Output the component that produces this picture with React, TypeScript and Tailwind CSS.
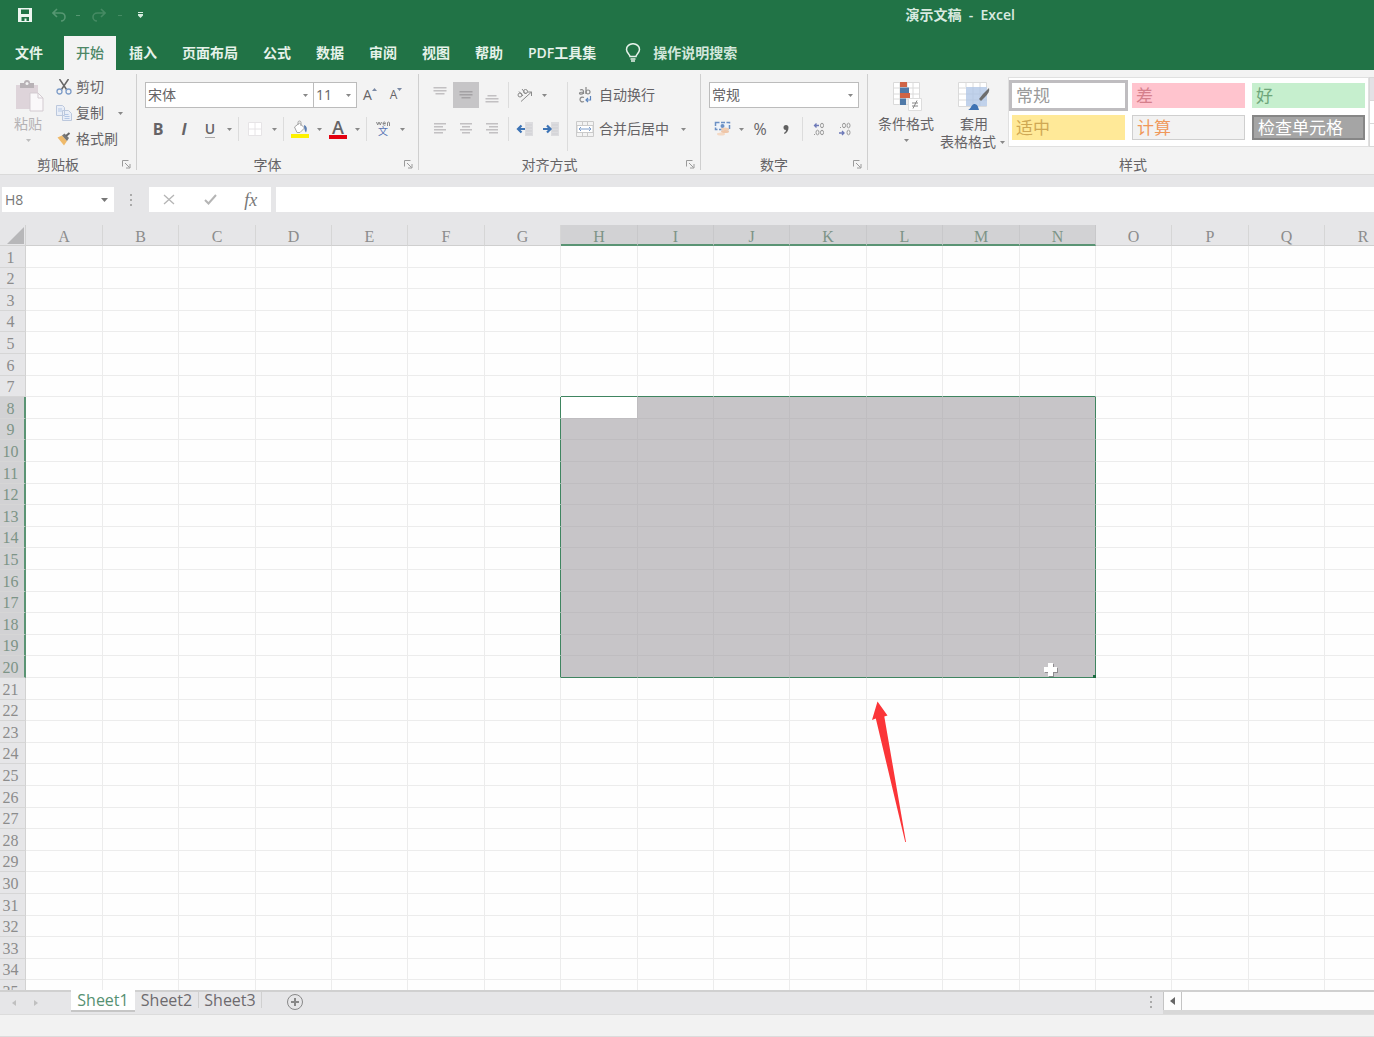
import type { ReactNode } from "react";

const COLUMNS = "ABCDEFGHIJKLMNOPQRSTUVWXYZ".split("");
const ROWS = Array.from({ length: 48 }, (_, i) => i + 1);
const TABS = ["插入", "页面布局", "公式", "数据", "审阅", "视图", "帮助", "PDF工具集"];

// selected range H8:N20
const SEL = { left: 7, right: 13, top: 8, bottom: 20 };

const inCols = (c: number) => c >= SEL.left && c <= SEL.right;
const inRows = (r: number) => r >= SEL.top && r <= SEL.bottom;

// zoomed sheet, so sizes alternate between two whole pixel values
const colWidth = (c: number) => (c % 5 === 0 || c % 5 === 2 ? "w-[77px]" : "w-[76px]");
const rowHeight = (r: number) => (r % 5 === 2 || r % 5 === 4 ? "h-[21px]" : "h-[22px]");

function Caret({ className = "w-3" }: { className?: string }) {
	return (
		<span className={`flex shrink-0 items-center justify-center ${className}`}>
			<svg width="5" height="3" viewBox="0 0 5 3" aria-hidden="true">
				<path d="M0 0h5L2.5 3z" fill="#888" />
			</svg>
		</span>
	);
}

function Sep() {
	return <span className="mx-[3px] w-px shrink-0 self-stretch bg-[#dcdcdc]" />;
}

function Tool({ label, active, children }: { label: string; active?: boolean; children: ReactNode }) {
	return (
		<button
			type="button"
			aria-label={label}
			className={`flex h-full w-[26px] shrink-0 items-center justify-center ${active ? "bg-[#c6c5c7]" : ""}`}
		>
			{children}
		</button>
	);
}

function Group({ title, launcher, className = "", children }: { title: string; launcher?: boolean; className?: string; children: ReactNode }) {
	return (
		<section className={`flex flex-col ${className}`}>
			<div className="flex h-[85px]">{children}</div>
			<div className="flex h-[11px] items-center leading-3">
				<h2 className={`flex-1 text-center ${launcher ? "" : "pl-5"}`}>{title}</h2>
				{launcher && (
					<button type="button" aria-label={`${title}设置`} className="w-5 pl-[6px]">
						<svg width="9" height="9" viewBox="0 0 9 9" fill="none" stroke="#9a9a9a" aria-hidden="true">
							<path d="M.5 6.5v-6h6M3 3l4.5 4.5M8 4v4H4" />
						</svg>
					</button>
				)}
			</div>
		</section>
	);
}

function Lines({ y, widths, align, color = "#c2c0c2" }: { y: number; widths: number[]; align: "l" | "c" | "r"; color?: string }) {
	return (
		<svg width="16" height="18" viewBox="0 0 16 18" aria-hidden="true">
			{widths.map((w, i) => (
				<rect
					key={i}
					x={align === "l" ? 2 : align === "r" ? 14 - w : 8 - w / 2}
					y={y + i * 3}
					width={w}
					height="1.5"
					fill={color}
				/>
			))}
		</svg>
	);
}

function Indent({ flip }: { flip?: boolean }) {
	return (
		<svg width="18" height="16" viewBox="0 0 18 16" aria-hidden="true">
			<rect x="9" y="1" width="8" height="14" fill="#dcdcdf" />
			<path d="M10 4h6M10 7h6M10 10h6M10 13h6" stroke="#cfcfd3" />
			<path d={flip ? "M1 8h7M5 4.5L8.5 8 5 11.5" : "M2 8h7M5.5 4.5L2 8l3.5 3.5"} fill="none" stroke="#3c73b5" strokeWidth="2.2" />
		</svg>
	);
}

function TitleBar() {
	return (
		<div className="flex h-9 items-center pb-[6px]">
			<div className="flex items-center pl-[18px]">
				<button type="button" aria-label="保存">
					<svg width="14" height="14" viewBox="0 0 14 14" aria-hidden="true">
						<path d="M0 0h14v14H0z" fill="#edf6f0" />
						<path d="M3 1.5h8V6H3zM3.5 9H11v4H8.500v-2.500h-2V13h-3z" fill="#217346" />
					</svg>
				</button>
				<button type="button" aria-label="撤消" className="ml-5">
					<svg width="14" height="14" viewBox="0 0 14 14" fill="none" stroke="#569772" strokeWidth="1.6" aria-hidden="true">
						<path d="M5 1L1 5l4 4M1 5h7.500c3 0 4.500 2 4.500 4s-1.500 4-4 4" />
					</svg>
				</button>
				<span className="ml-[10px] h-px w-1 bg-[#569772]" />
				<button type="button" aria-label="恢复" className="ml-3">
					<svg width="14" height="14" viewBox="0 0 14 14" fill="none" stroke="#458a63" strokeWidth="1.6" aria-hidden="true">
						<path d="M9 1l4 4-4 4M13 5H5.500C2.500 5 1 7 1 9s1.500 4 4 4" />
					</svg>
				</button>
				<span className="ml-3 h-px w-1 bg-[#458a63]" />
				<button type="button" aria-label="自定义快速访问工具栏" className="ml-4">
					<svg width="5" height="6" viewBox="0 0 5 6" fill="#d5ebde" aria-hidden="true">
						<path d="M0 0h5v1H0zM0 2h5v1.500L2.500 6 0 3.500z" />
					</svg>
				</button>
			</div>
			<h1 className="mr-[359px] ml-auto font-semibold whitespace-pre text-[#d9eae0]">{"演示文稿  -  Excel"}</h1>
		</div>
	);
}

function TabBar() {
	return (
		<nav className="flex h-[34px] items-stretch gap-px font-semibold whitespace-nowrap text-[#e6f2ea]">
			<button type="button" className="mr-[5px] px-[15px]">文件</button>
			<button type="button" className="bg-[#f3f3f3] px-3 font-medium text-[#4d8766]">开始</button>
			{TABS.map((t) => (
				<button type="button" key={t} className="px-3">{t}</button>
			))}
			<button type="button" className="flex items-center gap-3 pl-4 text-[#d3e7db]">
				<svg width="16" height="20" viewBox="0 0 16 20" fill="none" stroke="#e6f2ea" strokeWidth="1.5" aria-hidden="true">
					<path d="M5 13.500c0-2-3.500-3.500-3.500-7a6.200 5.500 0 0 1 13 0c0 3.500-3.500 5-3.500 7zM5.500 16h5M6 18h4" />
				</svg>
				操作说明搜索
			</button>
		</nav>
	);
}

function Clipboard() {
	return (
		<Group title="剪贴板" launcher className="w-[137px] shrink-0 border-r border-[#cfcfcf]">
			<button type="button" className="ml-2 flex w-10 flex-col items-center pt-[6px] text-[#b5b2b5]">
				<svg width="32" height="32" viewBox="0 0 32 32" aria-hidden="true">
					<path d="M4 5h22v24H4z" fill="#ded4da" />
					<path d="M8 3h4a3 3 0 0 1 6 0h4v5H8z" fill="#b8b2b6" />
					<circle cx="15" cy="3.5" r="1.5" fill="#f3f3f3" />
					<path d="M18 13h8l5 5v13H18z" fill="#faf8fa" stroke="#d3cbd1" />
					<path d="M26 13v5h5" fill="none" stroke="#d3cbd1" />
				</svg>
				<span className="leading-6">粘贴</span>
				<Caret className="h-2 w-3 opacity-50" />
			</button>
			<div className="flex flex-1 flex-col pl-2">
				<button type="button" className="flex h-[26px] items-center gap-1">
					<svg width="16" height="16" viewBox="0 0 16 16" fill="none" aria-hidden="true">
						<path d="M3.500 0l7 10.500M12.500 0l-7 10.500" stroke="#666" strokeWidth="1.5" />
						<circle cx="3.500" cy="12.500" r="2.500" stroke="#7d9cc8" strokeWidth="1.3" />
						<circle cx="12.500" cy="12.500" r="2.500" stroke="#7d9cc8" strokeWidth="1.3" />
					</svg>
					剪切
				</button>
				<button type="button" className="flex h-[26px] items-center gap-1">
					<svg width="16" height="16" viewBox="0 0 16 16" fill="#e9eef7" stroke="#bcc8dd" aria-hidden="true">
						<path d="M.5.5h6l2 2v8h-8zM6.500 5.500h6l3 3v7h-9z" />
						<path d="M2 4h4M2 6h4M8.500 9.500h4M8.500 11.500h5M8.500 13.500h5" stroke="#b4c7e5" />
					</svg>
					复制
					<Caret className="ml-1 w-4" />
				</button>
				<button type="button" className="flex h-[26px] items-center gap-1">
					<svg width="16" height="16" viewBox="0 0 16 16" aria-hidden="true">
						<path d="M1.500 6.500l4.500-2 5 5.500-3 4.500z" fill="#efba6b" />
						<path d="M6 4.500L8.500 2.500l4.500 4.500-2 3z" fill="#777" />
						<path d="M10 5l3.500-3" stroke="#666" strokeWidth="2" />
					</svg>
					格式刷
				</button>
			</div>
		</Group>
	);
}

function Select({ label, value, className }: { label: string; value: string; className: string }) {
	return (
		<div className={`relative h-[26px] border border-[#bcbcbc] bg-white ${className}`}>
			<select aria-label={label} className="h-full w-full appearance-none pl-[2px] outline-none">
				<option>{value}</option>
			</select>
			<span className="pointer-events-none absolute inset-y-0 right-1 flex">
				<Caret className="w-2" />
			</span>
		</div>
	);
}

function FontGroup() {
	return (
		<Group title="字体" launcher className="w-[282px] shrink-0 border-r border-[#cfcfcf]">
			<div className="flex flex-col gap-[9px] pt-2 pl-2">
				<div className="flex h-[26px]">
					<Select label="字体" value="宋体" className="w-[169px]" />
					<Select label="字号" value="11" className="-ml-px w-11" />
					<Tool label="增大字号">
						<span className="text-sm">A</span>
						<svg className="mb-3" width="5" height="3" viewBox="0 0 5 3" aria-hidden="true"><path d="M0 3h5L2.500 0z" fill="#7b8aa5" /></svg>
					</Tool>
					<Tool label="减小字号">
						<span className="text-xs">A</span>
						<svg className="mb-3" width="5" height="3" viewBox="0 0 5 3" aria-hidden="true"><path d="M0 0h5L2.500 3z" fill="#7b8aa5" /></svg>
					</Tool>
				</div>
				<div className="flex h-6">
					<Tool label="加粗"><span className="text-base font-bold">B</span></Tool>
					<Tool label="倾斜"><span className="text-base font-bold italic">I</span></Tool>
					<Tool label="下划线"><span className="border-b border-[#aaa] text-sm leading-4 font-semibold">U</span></Tool>
					<Caret />
					<Sep />
					<Tool label="边框">
						<svg width="14" height="14" viewBox="0 0 14 14" fill="#fff" stroke="#e6e4e6" aria-hidden="true">
							<path d="M.5.5h13v13H.5zM7 0v14M0 7h14" />
						</svg>
					</Tool>
					<Caret />
					<Sep />
					<Tool label="填充颜色">
						<svg width="18" height="18" viewBox="0 0 18 18" aria-hidden="true">
							<path d="M3.500 7l5-4 5 5-4.500 4.500H6z" fill="#fff" stroke="#a5a5a5" />
							<path d="M7 5V2.500a1.500 1.500 0 0 1 3 0V6" fill="none" stroke="#a5a5a5" />
							<path d="M13 5c3 1 3.500 4 2 7.500-1-1-2-4-2-7.500z" fill="#5c7fb2" />
							<rect y="14" width="18" height="4" fill="#fdf100" />
						</svg>
					</Tool>
					<Caret />
					<Tool label="字体颜色">
						<span className="flex w-[18px] flex-col items-center border-b-4 border-[#e3000f] text-lg leading-[15px] font-semibold">A</span>
					</Tool>
					<Caret />
					<Sep />
					<Tool label="拼音指南">
						<span className="flex flex-col items-center">
							<svg width="14" height="5" viewBox="0 0 14 5" fill="none" stroke="#8a8a8a" aria-hidden="true">
								<path d="M.5 1l1.200 3L3 1l1.300 3 1.200-3M7 2.500h2.500C9.500.500 7 .5 7 2.500s1.500 2 2.500 1.500M11.500 5V1.500c1-.7 2-.5 2 .5v3" />
							</svg>
							<span className="text-[10px] leading-[11px] text-[#5673b5]">文</span>
						</span>
					</Tool>
					<Caret />
				</div>
			</div>
		</Group>
	);
}

function AlignGroup() {
	return (
		<Group title="对齐方式" launcher className="w-[282px] shrink-0 border-r border-[#cfcfcf]">
			<div className="flex flex-col gap-[9px] pt-2 pl-2">
				<div className="flex h-[26px]">
					<Tool label="顶端对齐"><Lines y={1} widths={[13, 13, 9]} align="c" /></Tool>
					<Tool label="垂直居中" active><Lines y={5} widths={[13, 13, 9]} align="c" color="#a3a1a4" /></Tool>
					<Tool label="底端对齐"><Lines y={9} widths={[9, 13, 13]} align="c" /></Tool>
					<Sep />
					<Tool label="方向">
						<svg width="18" height="18" viewBox="0 0 18 18" fill="none" stroke="#8a8a8a" aria-hidden="true">
							<circle cx="4" cy="9" r="2" />
							<path d="M3 5.500l4 4.500M6 3l4 5" />
							<circle cx="9.500" cy="5.500" r="2" />
							<path d="M5 15.500L15.500 6M11.500 6h4v4" />
						</svg>
					</Tool>
					<Caret />
				</div>
				<div className="flex h-6">
					<Tool label="左对齐"><Lines y={3} widths={[12, 9, 12, 9]} align="l" /></Tool>
					<Tool label="居中"><Lines y={3} widths={[12, 8, 12, 8]} align="c" /></Tool>
					<Tool label="右对齐"><Lines y={3} widths={[12, 9, 12, 9]} align="r" /></Tool>
					<Sep />
					<Tool label="减少缩进量"><Indent /></Tool>
					<Tool label="增加缩进量"><Indent flip /></Tool>
				</div>
			</div>
			<div className="flex py-2">
				<Sep />
			</div>
			<div className="flex flex-col gap-[9px] pt-2 whitespace-nowrap">
				<button type="button" className="flex h-[26px] items-center">
					<span className="flex w-7 justify-center">
						<svg width="14" height="16" viewBox="0 0 14 16" fill="none" stroke="#888" strokeWidth="1.2" aria-hidden="true">
							<path d="M2 3c2-1 3.500 0 3.500 1.500V7M5.500 5C3 5 1.500 5 1.500 6.200S4 7.500 5.500 6M8 0v7" />
							<circle cx="10" cy="5" r="2" />
							<path d="M6 10.500c-2-1-4 0-4 2s2 3 4 2" />
							<path d="M12.500 9v4H8M10 11l-2 2 2 2" stroke="#5b84bd" />
						</svg>
					</span>
					自动换行
				</button>
				<button type="button" className="flex h-6 items-center">
					<span className="flex w-7 justify-center">
						<svg width="18" height="16" viewBox="0 0 18 16" fill="none" stroke="#cacaca" aria-hidden="true">
							<path d="M.5.5h17v15H.5z" />
							<path d="M1 4.500h16v7H1z" fill="#fff" />
							<path d="M6.500.5v4M11.500.5v4M6.500 11.500v4M11.500 11.500v4" />
							<path d="M3 8h12M5 6L3 8l2 2M13 6l2 2-2 2" stroke="#7a9ccb" />
						</svg>
					</span>
					合并后居中
					<Caret className="ml-[6px] w-4" />
				</button>
			</div>
		</Group>
	);
}

function NumberGroup() {
	return (
		<Group title="数字" launcher className="w-[167px] shrink-0 border-r border-[#cfcfcf]">
			<div className="flex flex-col gap-[9px] pt-2 pl-2">
				<Select label="数字格式" value="常规" className="w-[150px]" />
				<div className="flex h-6">
					<Tool label="会计数字格式">
						<svg width="17" height="16" viewBox="0 0 17 16" aria-hidden="true">
							<path d="M1.500 1.500h14v7h-14z" fill="#eef3fa" stroke="#6b90c4" strokeDasharray="4 1.500" strokeWidth="1.5" />
							<circle cx="8.500" cy="5" r="2" fill="#6b90c4" />
							<ellipse cx="11" cy="8" rx="4" ry="1.500" fill="#f2cfb4" />
							<ellipse cx="11" cy="10.500" rx="4" ry="1.500" fill="#efc6a8" />
							<ellipse cx="7" cy="13" rx="4" ry="1.500" fill="#f4d9c4" />
						</svg>
					</Tool>
					<Caret />
					<Tool label="百分比样式"><span className="text-base">%</span></Tool>
					<Tool label="千位分隔样式">
						<svg width="6" height="9" viewBox="0 0 6 9" aria-hidden="true">
							<path d="M3 0a2.500 2.500 0 0 1 2.500 2.500C5.500 5.500 4 8 1.500 9L1 8c1.200-.8 2-1.800 2-3A2.500 2.500 0 0 1 3 0z" fill="#606060" />
						</svg>
					</Tool>
					<Sep />
					<Tool label="增加小数位数">
						<svg width="12" height="14" viewBox="0 0 12 14" fill="none" stroke="#9a9a9a" aria-hidden="true">
							<path d="M6 3.500H1.500M3.500 1.500l-2 2 2 2" stroke="#6d79b8" strokeWidth="1.3" />
							<ellipse cx="9" cy="3.500" rx="1.500" ry="2.300" />
							<ellipse cx="4.500" cy="10.500" rx="1.500" ry="2.300" />
							<ellipse cx="9" cy="10.500" rx="1.500" ry="2.300" />
							<path d="M1 12.500h1" />
						</svg>
					</Tool>
					<Tool label="减少小数位数">
						<svg width="14" height="14" viewBox="0 0 14 14" fill="none" stroke="#9a9a9a" aria-hidden="true">
							<ellipse cx="6" cy="3.500" rx="1.500" ry="2.300" />
							<ellipse cx="10.500" cy="3.500" rx="1.500" ry="2.300" />
							<ellipse cx="10.500" cy="10.500" rx="1.500" ry="2.300" />
							<path d="M2 5.500h1" />
							<path d="M1 11h5M4 9l2 2-2 2" stroke="#6d79b8" strokeWidth="1.3" />
						</svg>
					</Tool>
				</div>
			</div>
		</Group>
	);
}

const CELL_STYLES = [
	{ name: "常规", look: "bg-white text-[#9a9a9a] outline-3 outline-[#bfbdc0]" },
	{ name: "差", look: "bg-[#ffc4ce] text-[#d5808c]" },
	{ name: "好", look: "bg-[#c6efce] text-[#6ea67a]" },
	{ name: "适中", look: "bg-[#ffe998] text-[#cfa854]" },
	{ name: "计算", look: "border border-[#cfcfcf] bg-[#f2f2f2] text-[#f0985a]" },
	{ name: "检查单元格", look: "border-2 border-[#868686] bg-[#a5a5a5] text-white" },
];

function StylesGroup() {
	return (
		<Group title="样式" className="min-w-0 flex-1 pl-1">
			<button type="button" className="flex w-[68px] shrink-0 flex-col items-center pt-[6px]">
				<svg width="32" height="32" viewBox="0 0 32 32" fill="none" aria-hidden="true">
					<path d="M3.500 2.500h26v22h-26z" fill="#fff" stroke="#dadada" />
					<path d="M10 2v23M17 2v23M23 2v23M3 8h27M3 14h27M3 19h27" stroke="#dadada" />
					<path d="M10 2h7v5h-7zM10 13h10v5H10z" fill="#cf6446" />
					<path d="M10 7.500h9V13h-9zM10 18.500h6V25h-6z" fill="#4f79a8" />
					<path d="M18.500 18.500h13v12h-13z" fill="#fff" stroke="#ddd" />
					<path d="M22 23h6M22 26h6M27 20.500l-4 8" stroke="#888" />
				</svg>
				<span className="leading-6">条件格式</span>
				<Caret className="h-2 w-3" />
			</button>
			<button type="button" className="flex w-[68px] shrink-0 flex-col items-center pt-[6px]">
				<svg width="34" height="32" viewBox="0 0 34 32" fill="none" aria-hidden="true">
					<path d="M1.500 2.500h28v24h-28z" fill="#fff" stroke="#dadada" />
					<path d="M9 7h21v19H9z" fill="#c1d2eb" />
					<path d="M9 2v5M16 2v5M23 2v5M2 8h7M2 14h7M2 20h7" stroke="#dadada" />
					<path d="M16 7v19M23 7v19M9 14h21M9 20h21" stroke="#b9cae3" />
					<path d="M32 8c1 3-1 6-4 9l-4 4-2-2 4-5z" fill="#6d6d6d" />
					<path d="M11 30c3-1 3-5 6-6 3 0 4 2 5 6z" fill="#3f73b4" />
				</svg>
				<span className="leading-6">套用</span>
				<span className="flex leading-3 whitespace-nowrap">
					表格格式
					<Caret />
				</span>
			</button>
			<div className="mt-[3px] grid h-[70px] shrink-0 grid-cols-[113px_113px_113px] grid-rows-[25px_25px] gap-[7px] border border-[#e0e0e0] bg-white px-[3px] pt-[5px]">
				{CELL_STYLES.map((s) => (
					<button type="button" key={s.name} className={`flex items-center pl-1 text-[17px] leading-5 ${s.look}`}>
						{s.name}
					</button>
				))}
			</div>
			<div className="mt-[3px] flex h-[70px] w-4 shrink-0 flex-col divide-y divide-[#d8d8d8] border border-[#d8d8d8] bg-white">
				<button type="button" aria-label="上一行" className="flex-1 bg-[#e3e1e5]" />
				<button type="button" aria-label="下一行" className="flex-1" />
				<button type="button" aria-label="其他" className="flex-1" />
			</div>
		</Group>
	);
}

function FormulaBar() {
	return (
		<div className="flex h-[51px] items-center border-t border-[#dadada] pb-px text-[#777]">
			<div className="relative ml-[2px] h-[25px] w-28 bg-white">
				<input aria-label="名称框" defaultValue="H8" className="h-full w-full pl-[3px] outline-none" />
				<svg className="absolute top-[11px] right-[6px]" width="7" height="4" viewBox="0 0 7 4" aria-hidden="true">
					<path d="M0 0h7L3.500 4z" fill="#777" />
				</svg>
			</div>
			<svg className="mx-4" width="3" height="12" viewBox="0 0 3 12" fill="#aaa" aria-hidden="true">
				<path d="M0 0h2v2H0zM0 5h2v2H0zM0 10h2v2H0z" />
			</svg>
			<div className="flex h-[25px] w-[122px] items-center bg-white">
				<button type="button" aria-label="取消" className="flex flex-1 justify-center">
					<svg width="12" height="11" viewBox="0 0 12 11" stroke="#b5b5b5" strokeWidth="1.3" aria-hidden="true">
						<path d="M1 1l10 9M11 1L1 10" />
					</svg>
				</button>
				<button type="button" aria-label="输入" className="flex flex-1 justify-center">
					<svg width="13" height="11" viewBox="0 0 13 11" fill="none" stroke="#b5b5b5" strokeWidth="2" aria-hidden="true">
						<path d="M1 6l3.500 3.500L12 1" />
					</svg>
				</button>
				<button type="button" aria-label="插入函数" className="flex-1 font-['Liberation_Serif',serif] text-lg leading-5 italic">fx</button>
			</div>
			<input aria-label="编辑栏" className="ml-[5px] h-[25px] min-w-0 flex-1 bg-white outline-none" />
		</div>
	);
}

function cellLook(r: number, c: number) {
	if (!inRows(r) || !inCols(c)) {
		let edge = "border-r border-b ";
		// cells just above and left of the range carry its outline
		edge += r === SEL.top - 1 && inCols(c) ? "border-b-[#3f8560] " : "border-b-[#ececec] ";
		edge += c === SEL.left - 1 && inRows(r) ? "border-r-[#3f8560]" : "border-r-[#ececec]";
		return edge;
	}
	const right = c === SEL.right ? "border-r border-r-[#3f8560]" : "border-r border-r-[#bfbdc0]";
	const bottom = r === SEL.bottom ? "border-b border-b-[#3f8560]" : "border-b border-b-[#bfbdc0]";
	const bg = r === SEL.top && c === SEL.left ? "bg-white" : "bg-[#c7c5c8]";
	return `${right} ${bottom} ${bg}`;
}

function Sheet() {
	return (
		<main className="relative min-h-0 flex-1 overflow-hidden bg-[#fefefe]">
			<table className="w-max table-fixed border-separate border-spacing-0 font-['Liberation_Serif',serif] text-base leading-5 text-[#8c8c8c]">
				<thead>
					<tr className="h-[21px]">
						<th aria-label="全选" className="w-[26px] border-r border-b border-[#d2d2d2] bg-[#e6e6e8] p-0">
							<svg width="25" height="20" viewBox="0 0 25 20" aria-hidden="true">
								<path d="M24 2v17H7z" fill="#b7b7b9" />
							</svg>
						</th>
						{COLUMNS.map((name, c) => (
							<th
								key={name}
								scope="col"
								className={`${colWidth(c)} border-r px-0 pb-0 font-normal ${
									inCols(c)
										? "border-r-[#c8c8ca] border-b-2 border-b-[#5a9474] bg-[#d2d2d4] pt-1 leading-[15px] text-[#7d9487]"
										: "border-r-[#d6d6d6] border-b border-b-[#cfcfcf] bg-[#e6e6e8] pt-[3px] leading-4"
								}`}
							>
								{name}
							</th>
						))}
					</tr>
				</thead>
				<tbody>
					{ROWS.map((r) => (
						<tr key={r} className={rowHeight(r)}>
							<th
								scope="row"
								className={`border-b border-b-[#d6d6d6] px-0 pt-[2px] pb-0 leading-[18px] font-normal ${
									inRows(r)
										? "border-r-2 border-r-[#5a9474] bg-[#d2d2d4] pr-[3px] text-[#7d9487]"
										: "border-r border-r-[#d2d2d2] bg-[#e6e6e8] pr-1"
								}`}
							>
								{r}
							</th>
							{COLUMNS.map((name, c) => (
								<td key={name} className={`relative p-0 ${cellLook(r, c)}`}>
									{r === SEL.bottom && c === SEL.right && (
										<span className="absolute -right-px -bottom-px z-10 size-[3px] bg-[#1c6b40]" />
									)}
								</td>
							))}
						</tr>
					))}
				</tbody>
			</table>
			<svg className="absolute top-[436px] left-[1042px]" width="18" height="18" viewBox="0 0 18 18" aria-hidden="true">
				<path d="M7 3h5v4h4v5h-4v4H7v-4H3V7h4z" fill="#8e8c90" />
				<path d="M6 2h5v4h4v5h-4v4H6v-4H2V6h4z" fill="#fff" />
			</svg>
			<svg className="absolute top-[475px] left-[870px]" width="40" height="145" viewBox="0 0 40 145" aria-hidden="true">
				<path d="M7.500 1.500L17.500 15.500l-3.200 1L36 142h-.8L5.800 18.500 2 20z" fill="#fb3538" />
			</svg>
		</main>
	);
}

function SheetTabs() {
	return (
		<footer>
			<div className="flex h-6 items-stretch border-t-2 border-[#d0d0d0] bg-[#e6e6e8] text-base leading-4 text-[#6d6a6e]">
				<div className="flex w-[71px] items-center gap-[18px] pl-3">
					<button type="button" aria-label="上一张">
						<svg width="4" height="6" viewBox="0 0 4 6" fill="#c0c0c0" aria-hidden="true"><path d="M4 0v6L0 3z" /></svg>
					</button>
					<button type="button" aria-label="下一张">
						<svg width="4" height="6" viewBox="0 0 4 6" fill="#c0c0c0" aria-hidden="true"><path d="M0 0v6l4-3z" /></svg>
					</button>
				</div>
				<button type="button" className="-mt-[2px] mb-[2px] w-16 border-b-2 border-[#c6c6c6] bg-white text-[#569172]">Sheet1</button>
				<button type="button" className="mb-[6px] w-16 border-r border-[#d0d0d0]">Sheet2</button>
				<button type="button" className="mb-[6px] w-[63px] border-r border-[#d0d0d0]">Sheet3</button>
				<button type="button" aria-label="新工作表" className="mb-[2px] ml-6">
					<svg width="18" height="18" viewBox="0 0 18 18" fill="none" stroke="#888" aria-hidden="true">
						<circle cx="9" cy="9" r="7.500" />
						<path d="M9 5v8M5 9h8" strokeWidth="2" />
					</svg>
				</button>
				<svg className="mt-1 mr-[10px] ml-auto" width="3" height="13" viewBox="0 0 3 13" fill="#aaa" aria-hidden="true">
					<path d="M0 0h2v2H0zM0 5h2v2H0zM0 10h2v2H0z" />
				</svg>
				<div className="flex w-[211px] border-b-4 border-[#d8d8d8] bg-[#fdfdfd]">
					<button type="button" aria-label="向左滚动" className="flex w-[19px] items-center justify-center border-x border-[#c4c4c4]">
						<svg width="5" height="8" viewBox="0 0 5 8" fill="#666" aria-hidden="true"><path d="M5 0v8L0 4z" /></svg>
					</button>
				</div>
			</div>
			<div className="h-[23px] border-y border-[#dcdcdc] bg-[#f2f2f2]" />
		</footer>
	);
}

export default function App() {
	return (
		<div className="flex h-screen flex-col overflow-hidden bg-[#e6e6e8] font-['Open_Sans','Noto_Sans_CJK_SC',sans-serif] text-sm text-[#656366]">
			<header className="bg-[#217346]">
				<TitleBar />
				<TabBar />
			</header>
			<div className="flex bg-[#f3f3f3] py-1">
				<Clipboard />
				<FontGroup />
				<AlignGroup />
				<NumberGroup />
				<StylesGroup />
			</div>
			<FormulaBar />
			<Sheet />
			<SheetTabs />
		</div>
	);
}
